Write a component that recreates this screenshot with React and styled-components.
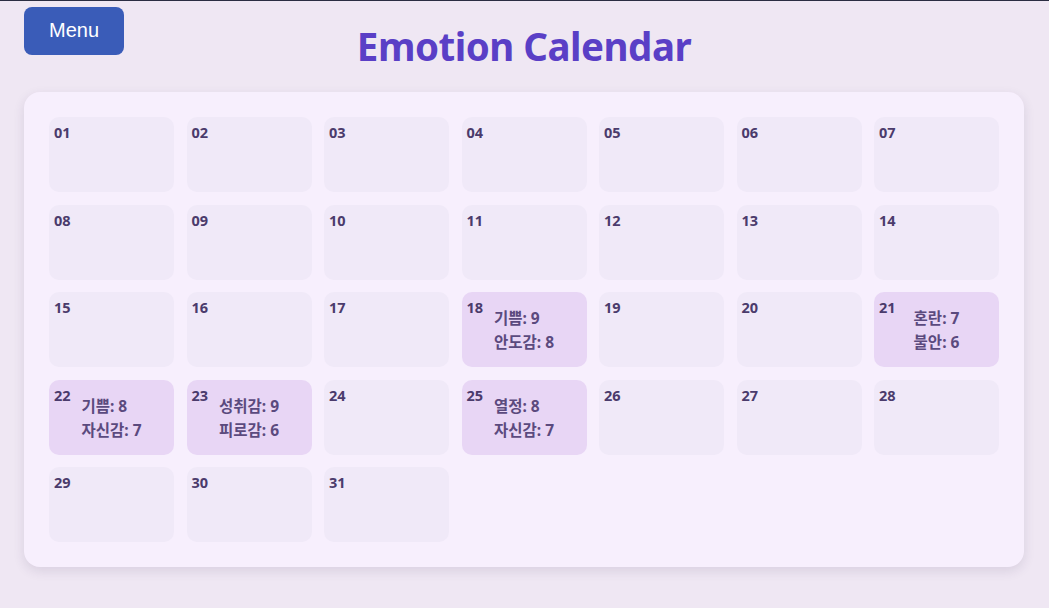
import styled, { createGlobalStyle } from "styled-components";

const GlobalStyle = createGlobalStyle`
  html, body {
    margin: 0;
    padding: 0;
  }
  body {
    background-color: #efe7f3;
    border-top: 1px solid #2b2d42;
    font-family: "Noto Sans", "Noto Sans CJK KR", sans-serif;
    min-height: 607px;
  }
`;

const emotions = {
  18: ["기쁨: 9", "안도감: 8"],
  21: ["혼란: 7", "불안: 6"],
  22: ["기쁨: 8", "자신감: 7"],
  23: ["성취감: 9", "피로감: 6"],
  25: ["열정: 8", "자신감: 7"],
};

const days = Array.from({ length: 31 }, (_, i) => i + 1);

const App = () => {
  return (
    <>
      <GlobalStyle />
      <Page>
        <Header>
          <MenuButton>Menu</MenuButton>
          <Title>Emotion Calendar</Title>
        </Header>
        <Board>
          {days.map((day) => {
            const list = emotions[day];
            return (
              <Day key={day} $marked={!!list}>
                <DayNumber>{String(day).padStart(2, "0")}</DayNumber>
                {list && (
                  <EmotionList>
                    {list.map((e) => (
                      <Emotion key={e}>{e}</Emotion>
                    ))}
                  </EmotionList>
                )}
              </Day>
            );
          })}
        </Board>
      </Page>
    </>
  );
};
export default App;

const Page = styled.div`
  width: 1000px;
  margin-left: 24px;
`;

const Header = styled.header`
  display: grid;
  grid-template-columns: 1fr auto 1fr;
  padding-top: 6px;
`;

const MenuButton = styled.button`
  justify-self: start;
  align-self: start;
  width: 100px;
  height: 48px;
  border: none;
  border-radius: 8px;
  background-color: #3a5cb8;
  color: #ffffff;
  font-family: "Liberation Sans", Arial, sans-serif;
  font-size: 20px;
  padding: 0 0 1px;
  cursor: pointer;
`;

const Title = styled.h1`
  margin: 11px 0 0;
  font-size: 38.5px;
  letter-spacing: -0.5px;
  line-height: 57px;
  font-weight: 700;
  color: #5a3fc6;
  white-space: nowrap;
`;

const Board = styled.main`
  margin-top: 17px;
  padding: 25px;
  background-color: #f7effd;
  border-radius: 16px;
  box-shadow: 0 4px 12px rgba(60, 40, 90, 0.12);
  display: grid;
  grid-template-columns: repeat(7, 1fr);
  grid-auto-rows: 75px;
  gap: 12.5px 12.5px;
`;

const Day = styled.div`
  display: grid;
  grid-template-areas: "stack";
  padding: 6px 5px;
  border-radius: 10px;
  background-color: ${({ $marked }) => ($marked ? "#e8d6f5" : "#f0e9f8")};
`;

const DayNumber = styled.span`
  grid-area: stack;
  justify-self: start;
  align-self: start;
  font-size: 14.5px;
  line-height: 19px;
  font-weight: 700;
  color: #4b3b6c;
`;

const EmotionList = styled.div`
  grid-area: stack;
  justify-self: center;
  align-self: start;
  margin-top: 8px;
  display: flex;
  flex-direction: column;
`;

const Emotion = styled.span`
  font-size: 15.5px;
  line-height: 24px;
  font-weight: 700;
  color: #5b4a7e;
  white-space: nowrap;
`;
